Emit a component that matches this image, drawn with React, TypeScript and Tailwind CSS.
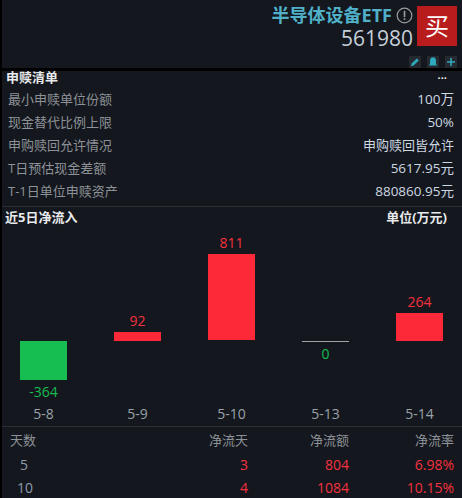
import React from 'react';

const font = { fontFamily: '"Open Sans", "Noto Sans CJK SC", sans-serif' };

const infoRows = [
  ['最小申赎单位份额', '100万', 'text-[13.5px]'],
  ['现金替代比例上限', '50%', 'text-[13.5px]'],
  ['申购赎回允许情况', '申购赎回皆允许', 'text-[13px]'],
  ['T日预估现金差额', '5617.95元', 'text-[13.5px]'],
  ['T-1日单位申赎资产', '880860.95元', 'text-[13.5px]'],
];

const IconButton: React.FC<{ children: React.ReactNode }> = ({ children }) => (
  <div className="w-3 h-3 bg-[#252a31] flex items-center justify-center">
    <svg width="12" height="12" viewBox="0 0 12 12" fill="#2fa9bd">{children}</svg>
  </div>
);

const App: React.FC = () => {
  return (
    <div style={font} className="w-[462px] h-[498px] overflow-hidden bg-[#14171d] border-l-2 border-black text-[13px] leading-[23px] text-[#8d9298]">
      {/* Header */}
      <div className="h-[68px] pr-[5px] flex flex-col items-end">
        <div className="flex mt-[5px] h-[41px]">
          <div className="flex flex-col items-end">
            <div className="flex items-center h-[20px]">
              <span className="text-[18px] leading-[20px] font-bold text-[#4fb0c8]">半导体设备ETF</span>
              <svg className="ml-[4px]" width="17" height="17" viewBox="0 0 17 17" fill="none">
                <circle cx="8.5" cy="8.5" r="7.3" stroke="#9a9da1" strokeWidth="1.2" />
                <rect x="7.7" y="3.8" width="1.6" height="6.4" fill="#9a9da1" />
                <rect x="7.7" y="11.3" width="1.6" height="1.7" fill="#9a9da1" />
              </svg>
            </div>
            <span className="text-[21px] leading-[26px] text-[#c6d0d9]">561980</span>
          </div>
          <div className="w-10 h-10 mt-px ml-[4px] bg-[#b91c1c] text-white text-[24px] leading-[40px] text-center">买</div>
        </div>
        <div className="flex gap-[6px] mt-[10px]">
          <IconButton><path d="M2 10.2 2.6 7.6 7.8 2.4 9.8 4.4 4.6 9.6Z" /></IconButton>
          <IconButton><path d="M6 1.2C8 1.2 9 2.8 9 4.6V7.6L10 9.6H2L3 7.6V4.6C3 2.8 4 1.2 6 1.2Z" /></IconButton>
          <IconButton><path d="M5.2 2H6.8V5.2H10V6.8H6.8V10H5.2V6.8H2V5.2H5.2Z" /></IconButton>
        </div>
      </div>
      <div className="h-[3px] bg-black -ml-[2px] w-[464px]" />

      {/* 申赎清单 */}
      <div className="flex justify-between items-center h-[13px] pl-[4px] pr-[15px] font-bold text-[#e8eaec]">
        <span className="leading-[13px]">申赎清单</span>
        <span className="text-[11px] leading-[13px]">···</span>
      </div>
      <div className="mt-[4px] pl-[6px] pr-[8px]">
        {infoRows.map(([label, value, size]) => (
          <div key={label} className="h-[23px] flex justify-between">
            <span>{label}</span>
            <span className={`text-[#ccd8e2] ${size}`}>{value}</span>
          </div>
        ))}
      </div>
      <div className="h-px mt-[3px] bg-[#2c2e33]" />

      {/* 近5日净流入 */}
      <div className="flex justify-between h-[18px] mt-[1px] pl-[3px] pr-[15px] font-bold text-[#e8eaec]">
        <span className="leading-[18px]">近5日净流入</span>
        <span className="leading-[18px]">单位(万元)</span>
      </div>

      <div className="h-[193px] pl-[18px] flex gap-[47px] mt-[7px] text-[14px] leading-[18px]">
        <div className="w-[47px] flex flex-col items-center">
          <div className="h-[39px] w-full shrink-0 mt-[108px] bg-[#16bd50]" />
          <span className="mt-[3px] text-[#16bd50] whitespace-nowrap">-364</span>
          <span className="mt-[4px] text-[#9aa2a9] whitespace-nowrap">5-8</span>
        </div>
        <div className="w-[47px] flex flex-col items-center">
          <span className="mt-[79px] text-[#f6313f]">92</span>
          <div className="h-[9px] w-full shrink-0 mt-[2px] bg-[#fd2838]" />
          <span className="mt-[64px] text-[#9aa2a9] whitespace-nowrap">5-9</span>
        </div>
        <div className="w-[47px] flex flex-col items-center">
          <span className="mt-px text-[#f6313f]">811</span>
          <div className="h-[86px] w-full shrink-0 mt-[2px] bg-[#fd2838]" />
          <span className="mt-[65px] text-[#9aa2a9] whitespace-nowrap">5-10</span>
        </div>
        <div className="w-[47px] flex flex-col items-center">
          <div className="h-px w-full shrink-0 mt-[108px] bg-[#a0a4a8]" />
          <span className="mt-[3px] text-[#16bd50]">0</span>
          <span className="mt-[42px] text-[#9aa2a9] whitespace-nowrap">5-13</span>
        </div>
        <div className="w-[47px] flex flex-col items-center">
          <span className="mt-[60px] text-[#f6313f]">264</span>
          <div className="h-[28px] w-full shrink-0 mt-[2px] bg-[#fd2838]" />
          <span className="mt-[64px] text-[#9aa2a9] whitespace-nowrap">5-14</span>
        </div>
      </div>

      <div className="h-px bg-[#2c2e33]" />

      {/* 净流入统计 */}
      <div className="pt-px">
        <div className="h-[25px] flex items-center">
          <span className="w-[60px] pl-[8px]">天数</span>
          <span className="w-[186px] text-right">净流天</span>
          <span className="w-[101px] text-right">净流额</span>
          <span className="w-[105px] text-right">净流率</span>
        </div>
        <div className="h-[23px] flex items-center text-[14px] text-[#f6313f]">
          <span className="w-[60px] pl-[18px] text-[#8d9bab]">5</span>
          <span className="w-[186px] text-right">3</span>
          <span className="w-[101px] text-right">804</span>
          <span className="w-[105px] text-right">6.98%</span>
        </div>
        <div className="h-[23px] flex items-center text-[14px] text-[#f6313f]">
          <span className="w-[60px] pl-[15px] text-[#8d9bab]">10</span>
          <span className="w-[186px] text-right">4</span>
          <span className="w-[101px] text-right">1084</span>
          <span className="w-[105px] text-right">10.15%</span>
        </div>
      </div>
    </div>
  );
};

export default App;
